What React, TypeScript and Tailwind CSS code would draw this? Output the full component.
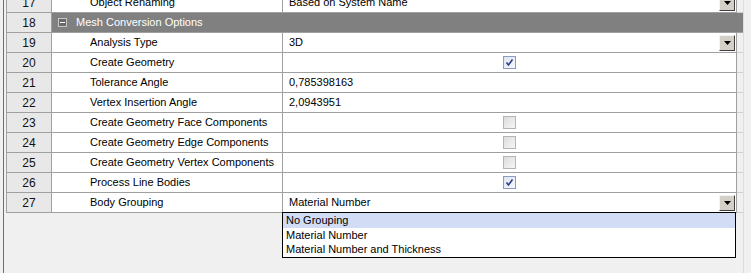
import React from 'react';

type Row =
  | { n: number; kind: 'header'; label: string }
  | { n: number; kind: 'text'; label: string; value: string; dropdown?: boolean }
  | { n: number; kind: 'check'; label: string; checked: boolean };

const rows: Row[] = [
  { n: 17, kind: 'text', label: 'Object Renaming', value: 'Based on System Name', dropdown: true },
  { n: 18, kind: 'header', label: 'Mesh Conversion Options' },
  { n: 19, kind: 'text', label: 'Analysis Type', value: '3D', dropdown: true },
  { n: 20, kind: 'check', label: 'Create Geometry', checked: true },
  { n: 21, kind: 'text', label: 'Tolerance Angle', value: '0,785398163' },
  { n: 22, kind: 'text', label: 'Vertex Insertion Angle', value: '2,0943951' },
  { n: 23, kind: 'check', label: 'Create Geometry Face Components', checked: false },
  { n: 24, kind: 'check', label: 'Create Geometry Edge Components', checked: false },
  { n: 25, kind: 'check', label: 'Create Geometry Vertex Components', checked: false },
  { n: 26, kind: 'check', label: 'Process Line Bodies', checked: true },
  { n: 27, kind: 'text', label: 'Body Grouping', value: 'Material Number', dropdown: true },
];

const options = ['No Grouping', 'Material Number', 'Material Number and Thickness'];

function DropButton() {
  return (
    <div className="w-[16px] h-[16px] bg-[#d4d0c8] border-t border-l border-t-[#f4f4f4] border-l-[#f4f4f4] border-b border-r border-b-[#404040] border-r-[#404040] flex items-center justify-center">
      <svg width="7" height="4" viewBox="0 0 7 4">
        <path d="M0 0h7L3.5 4z" fill="#000" />
      </svg>
    </div>
  );
}

function CheckBox({ checked }: { checked: boolean }) {
  return checked ? (
    <div className="w-[13px] h-[13px] border border-[#8a9cc2] bg-gradient-to-br from-[#dfe4ef] to-[#f7f8fb] flex items-center justify-center">
      <svg width="9" height="9" viewBox="0 0 9 9">
        <path d="M1.5 4.5L3.5 7L7.5 1.5" fill="none" stroke="#2a3f8c" strokeWidth="1.6" />
      </svg>
    </div>
  ) : (
    <div className="w-[13px] h-[13px] border border-[#b4b4b4] bg-gradient-to-br from-[#dcdcdc] to-[#f6f6f6]" />
  );
}

export default function App() {
  return (
    <div
      className="w-[751px] h-[273px] bg-[#f0f0f0] overflow-hidden flex text-[11px] text-black whitespace-nowrap"
      style={{ fontFamily: '"Liberation Sans", Arial, sans-serif' }}
    >
      <div className="w-[3px]" />
      <div className="w-px bg-[#6e6e6e]" />
      <div className="w-[2px]" />
      <div className="flex-1 flex flex-col -mt-[7px]">
        {rows.map((r) => (
          <div key={r.n} className="h-[20px] flex">
            <div className="w-[46px] shrink-0 bg-[#e8e8e8] border-l border-b border-r border-[#a0a0a0] flex items-center justify-center text-[#111] text-[12px]">
              {r.n}
            </div>
            {r.kind === 'header' ? (
              <div className="flex-1 bg-[#808080] border-b border-[#a0a0a0] flex items-center text-white">
                <div className="ml-[6px] w-[9px] h-[9px] border border-[#c8c8c8] bg-[#6a6a6a] flex items-center justify-center">
                  <div className="w-[5px] h-px bg-white" />
                </div>
                <span className="ml-[9px]">{r.label}</span>
              </div>
            ) : (
              <>
                <div className="w-[231px] shrink-0 bg-white border-b border-r border-[#a0a0a0] flex items-center pl-[38px] overflow-hidden">
                  {r.label}
                </div>
                <div className="relative w-[454px] shrink-0 bg-white border-b border-r border-[#a0a0a0] flex items-center">
                  {r.kind === 'text' ? (
                    <>
                      <span className="pl-[6px] flex-1">{r.value}</span>
                      {r.dropdown && <div className="mr-[1px]"><DropButton /></div>}
                    </>
                  ) : (
                    <div className="flex-1 flex justify-center">
                      <CheckBox checked={r.checked} />
                    </div>
                  )}
                  {r.n === 27 && (
                    <div className="absolute left-[-1px] top-[19px] w-[454px] bg-white border border-black z-10">
                      {options.map((o, i) => (
                        <div key={o} className={`h-[14.5px] leading-[14.5px] pl-[3px] ${i === 0 ? 'bg-[#d2dcf4]' : ''}`}>
                          {o}
                        </div>
                      ))}
                    </div>
                  )}
                </div>
                <div className="w-[6px] border-b border-[#d0d0d0]" />
              </>
            )}
          </div>
        ))}
      </div>
      <div className="w-px bg-[#dcdcdc]" />
      <div className="w-[7px]" />
    </div>
  );
}
